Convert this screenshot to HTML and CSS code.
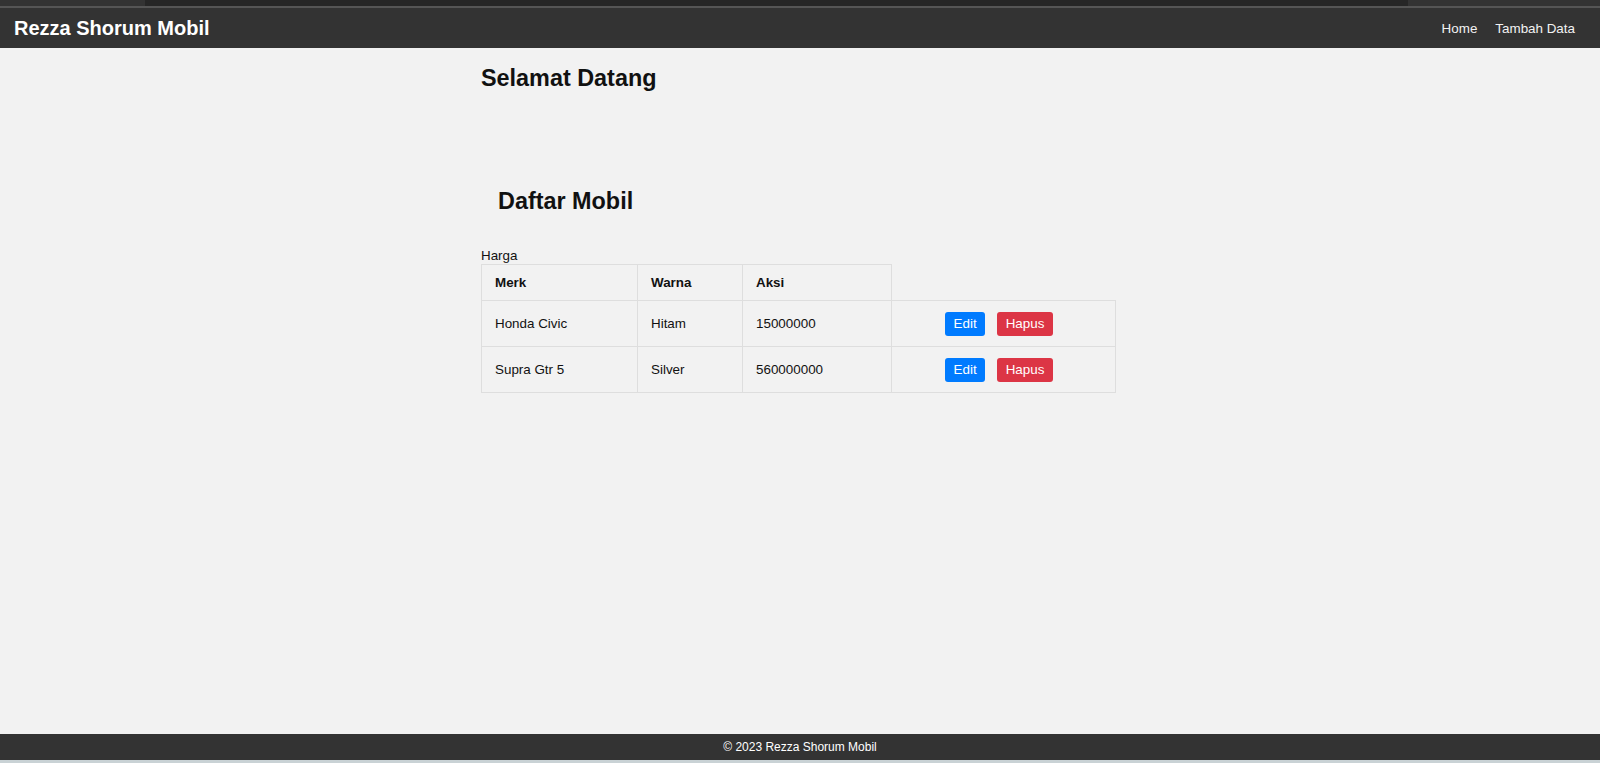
FILE: index.html
```html
<!DOCTYPE html>
<html lang="id">
<head>
<meta charset="utf-8">
<title>Rezza Shorum Mobil</title>
<link rel="stylesheet" href="styles.css">
</head>
<body>
<div class="chrome">
  <div class="chrome-band"></div>
</div>
<div class="chrome-line"></div>
<header class="topbar">
  <div class="brand">Rezza Shorum Mobil</div>
  <nav class="nav">
    <a href="#" class="nav-link">Home</a>
    <a href="#" class="nav-link">Tambah Data</a>
  </nav>
</header>
<main class="main">
  <div class="container">
    <h1 class="title">Selamat Datang</h1>
    <h2 class="subtitle">Daftar Mobil</h2>
    <div class="stray">Harga</div>
    <table class="cars">
      <colgroup>
        <col class="c1"><col class="c2"><col class="c3"><col class="c4">
      </colgroup>
      <thead>
        <tr><th>Merk</th><th>Warna</th><th>Aksi</th></tr>
      </thead>
      <tbody>
        <tr>
          <td>Honda Civic</td><td>Hitam</td><td>15000000</td>
          <td><div class="actions"><a href="#" class="btn btn-edit">Edit</a><a href="#" class="btn btn-del">Hapus</a></div></td>
        </tr>
        <tr>
          <td>Supra Gtr 5</td><td>Silver</td><td>560000000</td>
          <td><div class="actions"><a href="#" class="btn btn-edit">Edit</a><a href="#" class="btn btn-del">Hapus</a></div></td>
        </tr>
      </tbody>
    </table>
  </div>
</main>
<footer class="footer">© 2023 Rezza Shorum Mobil</footer>
<div class="bottom-strip"></div>
</body>
</html>
```
FILE: styles.css
```css
* { box-sizing: border-box; }
html, body { margin: 0; padding: 0; }
body {
  height: 100vh;
  display: flex;
  flex-direction: column;
  background: #f2f2f2;
  color: #111;
  font-family: "Liberation Sans", Arial, sans-serif;
  overflow: hidden;
}
.chrome {
  height: 6px;
  background: #333;
  display: flex;
  flex: none;
}
.chrome-band {
  margin-left: 145px;
  width: 1263px;
  background: #262626;
}
.chrome-line {
  height: 2px;
  background: #555;
  flex: none;
}
.topbar {
  flex: none;
  height: 40px;
  background: #333;
  display: flex;
  align-items: center;
  justify-content: space-between;
  padding: 0 25px 0 14px;
}
.brand {
  color: #fff;
  font-weight: bold;
  font-size: 20px;
}
.nav {
  display: flex;
  gap: 18px;
}
.nav-link {
  color: #f2f2f2;
  text-decoration: none;
  font-size: 13.4px;
}
.main {
  flex: 1;
}
.container {
  width: 638px;
  margin: 0 auto;
}
.title {
  margin: 17px 0 0;
  font-size: 23.4px;
  line-height: 26px;
  font-weight: bold;
}
.subtitle {
  margin: 97px 0 34px 17px;
  font-size: 23.4px;
  line-height: 26px;
  font-weight: bold;
}
.stray {
  font-size: 13.4px;
  line-height: 16px;
}
.cars {
  border-collapse: collapse;
  table-layout: fixed;
  width: 634px;
  font-size: 13.4px;
}
.c1 { width: 156px; }
.c2 { width: 105px; }
.c3 { width: 149px; }
.c4 { width: 224px; }
.cars th, .cars td {
  border: 1px solid #dedede;
  text-align: left;
  padding: 0 13px;
  vertical-align: middle;
}
.cars th {
  height: 36px;
  font-weight: bold;
}
.cars td {
  height: 46px;
}
.actions {
  display: flex;
  justify-content: center;
  gap: 12px;
  padding-right: 9px;
}
.btn {
  display: inline-block;
  height: 24px;
  line-height: 24px;
  padding: 0 8.5px;
  border-radius: 3px;
  color: #fff;
  text-decoration: none;
  font-size: 13.4px;
}
.btn-edit { background: #007bff; }
.btn-del { background: #dc3545; }
.footer {
  flex: none;
  height: 26px;
  background: #333;
  color: #fff;
  font-size: 12px;
  display: flex;
  align-items: center;
  justify-content: center;
}
.bottom-strip {
  flex: none;
  height: 3px;
  background: #c9d2d5;
}
```
